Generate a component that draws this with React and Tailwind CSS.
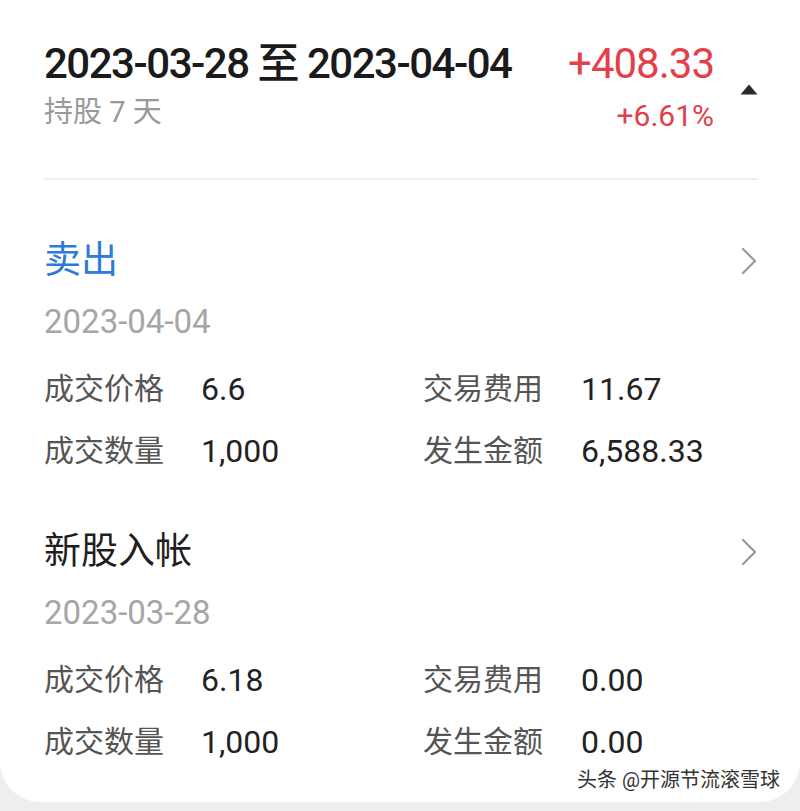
import React from 'react';

const FONT = { fontFamily: 'Roboto, "Noto Sans CJK SC", sans-serif' };

const records = [
  {
    type: '卖出',
    highlight: true,
    date: '2023-04-04',
    price: '6.6',
    fee: '11.67',
    qty: '1,000',
    amount: '6,588.33',
  },
  {
    type: '新股入帐',
    highlight: false,
    date: '2023-03-28',
    price: '6.18',
    fee: '0.00',
    qty: '1,000',
    amount: '0.00',
  },
];

const Chevron = () => (
  <svg width="18" height="30" viewBox="0 0 18 30" className="text-[#9a9a9a]">
    <path d="M3 3 L15 15 L3 27" fill="none" stroke="currentColor" strokeWidth="2.2" strokeLinecap="round" strokeLinejoin="round" />
  </svg>
);

const RecordBlock = ({ record }) => (
  <div className="pt-[57px]">
    <div className="flex items-center justify-between h-[48px]">
      <span className={`text-[37px] leading-[48px] ${record.highlight ? 'text-[#2f7ad6]' : 'text-[#1f1f1f]'}`}>
        {record.type}
      </span>
      <Chevron />
    </div>
    <div className="mt-[17px] text-[33px] leading-[40px] text-[#a6a6a6]">{record.date}</div>
    <div className="mt-[27px] grid grid-cols-[157px_222px_158px_1fr] gap-y-[22px] leading-[40px]">
      <span className="text-[30px] text-[#555]">成交价格</span>
      <span className="text-[32px] text-[#222]">{record.price}</span>
      <span className="text-[30px] text-[#555]">交易费用</span>
      <span className="text-[32px] text-[#222]">{record.fee}</span>
      <span className="text-[30px] text-[#555]">成交数量</span>
      <span className="text-[32px] text-[#222]">{record.qty}</span>
      <span className="text-[30px] text-[#555]">发生金额</span>
      <span className="text-[32px] text-[#222]">{record.amount}</span>
    </div>
  </div>
);

export default function App() {
  return (
    <div className="min-h-[811px] bg-[#eeeef0]" style={FONT}>
      <div className="relative bg-white rounded-b-[40px] pl-[44px] pr-[42px] pt-[40px] pb-[40px]">
        {/* header */}
        <div className="flex justify-between">
          <div>
            <div className="text-[42px] leading-[48px] font-medium tracking-[-1.5px] text-[#1a1a1a]">
              2023-03-28 至 2023-04-04
            </div>
            <div className="mt-[4px] text-[29px] leading-[40px] text-[#999]">持股 7 天</div>
          </div>
          <div className="flex items-center">
            <div className="flex flex-col items-end">
              <div className="text-[42px] leading-[48px] tracking-[-1px] text-[#e3404b]">+408.33</div>
              <div className="mt-[8px] text-[30px] leading-[40px] text-[#e3404b]">+6.61%</div>
            </div>
            <svg width="18" height="11" viewBox="0 0 18 11" className="ml-[26px] mt-[2px]">
              <path d="M9 0.5 L17.5 10.5 L0.5 10.5 Z" fill="#2b2b2b" />
            </svg>
          </div>
        </div>

        <div className="mt-[42px] h-[2px] bg-[#eeeeee]" />

        {records.map((r) => (
          <RecordBlock key={r.type} record={r} />
        ))}

        {/* watermark */}
        <div
          className="absolute right-[20px] bottom-[8px] text-[20px] leading-[28px] text-[#333]"
          style={{ textShadow: '0 0 2px #fff, 0 0 2px #fff' }}
        >
          头条 @开源节流滚雪球
        </div>
      </div>
    </div>
  );
}
